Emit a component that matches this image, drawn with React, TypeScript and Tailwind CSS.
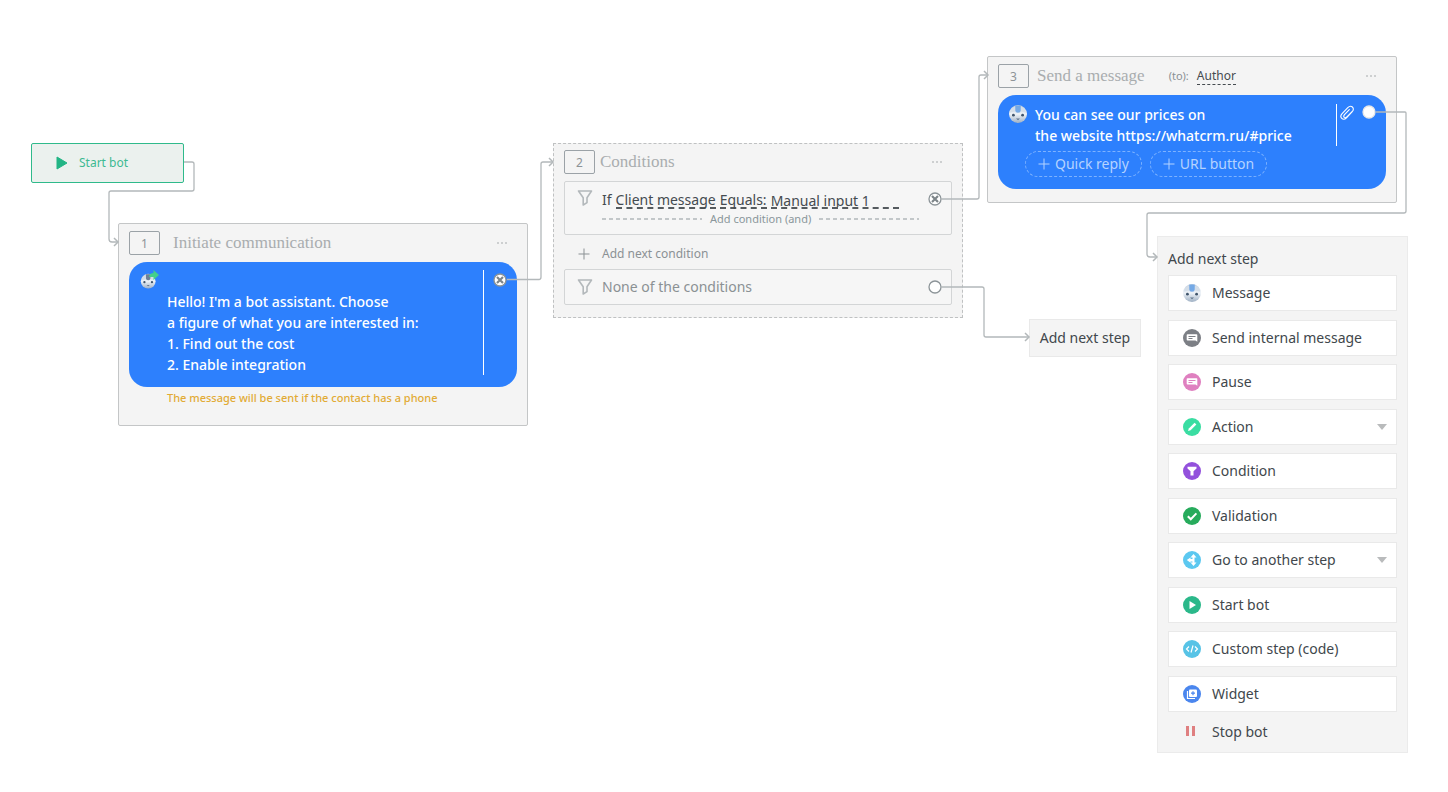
import type { ReactNode } from 'react';

const TEXT_FONT = "font-['Noto_Sans',sans-serif]";
const TITLE_FONT = "font-['Liberation_Serif',serif]";

/* ═══ ICONS ═══ */

function RobotIcon({ arrow = false }: { arrow?: boolean }) {
  return (
    <svg viewBox="0 0 20 20" className="w-5 h-5 shrink-0" aria-hidden="true">
      <defs>
        <linearGradient id="robot" x1="0" y1="0" x2="0" y2="1">
          <stop offset="0" stopColor="#b9c9dc" />
          <stop offset="0.5" stopColor="#eef3f8" />
          <stop offset="1" stopColor="#9fb0c4" />
        </linearGradient>
      </defs>
      <g transform={arrow ? 'translate(1 3) scale(.82)' : undefined}>
        <circle cx="10" cy="10" r="9" fill="url(#robot)" />
        <path d="M2 8.5a8 7 0 0 1 5-6v5zM18 8.5a8 7 0 0 0-5-6v5z" fill="#d5dee8" />
        <path d="M7.3 1.5h5.4v5.2a2.7 2 0 0 1-5.4 0z" fill={arrow ? '#6d8099' : '#74a9e6'} />
        <circle cx="5.4" cy="11.2" r="1.4" fill="#3f546b" />
        <circle cx="14.6" cy="11.2" r="1.4" fill="#3f546b" />
        <path d="M8 14.5h4l-2 1.8z" fill="#60758c" />
      </g>
      {arrow && <path d="M10 7c.5-3 2-4 4.5-4V0L20 5l-5.5 5V7z" fill="#43cf8b" />}
    </svg>
  );
}

function FunnelIcon() {
  return (
    <svg viewBox="0 0 16 18" className="w-4 h-[18px] shrink-0" fill="none" stroke="#b3b8bb" strokeWidth="1.6" strokeLinejoin="round" aria-hidden="true">
      <path d="M1.5 2h13L10 8.8v4.8L6.2 16V8.8z" />
    </svg>
  );
}

function PlusIcon() {
  return (
    <svg viewBox="0 0 12 12" className="w-3 h-3 shrink-0" fill="none" stroke="currentColor" aria-hidden="true">
      <path d="M6 .5v11M.5 6h11" />
    </svg>
  );
}

function ClipIcon() {
  return (
    <svg viewBox="0 0 16 16" className="w-4 h-4" fill="none" stroke="#fff" strokeWidth="1.1" strokeLinecap="round" aria-hidden="true">
      <path d="M12.8 7.2 7.5 12.8c-1.5 1.5-3.6 1.7-4.8.5s-1.1-3 .4-4.6l5.7-6c1.3-1.4 3.3-1.8 4.6-.7 1.3 1.2 1.2 3.1-.1 4.5L7.9 11.9c-.9.9-2 1-2.7.4-.7-.7-.5-1.7.3-2.6l4.8-5" />
    </svg>
  );
}

function StepIcon({ color, children }: { color: string; children: ReactNode }) {
  return (
    <svg viewBox="0 0 20 20" className="w-5 h-5 shrink-0" aria-hidden="true">
      <circle cx="10" cy="10" r="9" fill={color} />
      {children}
    </svg>
  );
}

const noteShape = (color: string) => (
  <>
    <path d="M5.5 6.2h9a.8.8 0 0 1 .8.8v6.8l-1.8-1.2h-8a.8.8 0 0 1-.8-.8V7a.8.8 0 0 1 .8-.8z" fill="#fff" />
    <path d="M6.5 8.5h7M6.5 10.5h4" stroke={color} />
  </>
);

const steps: { label: string; menu?: boolean; icon: ReactNode }[] = [
  { label: 'Message', icon: <RobotIcon /> },
  { label: 'Send internal message', icon: <StepIcon color="#7c7f85">{noteShape('#7c7f85')}</StepIcon> },
  { label: 'Pause', icon: <StepIcon color="#df80c0">{noteShape('#df80c0')}</StepIcon> },
  {
    label: 'Action',
    menu: true,
    icon: (
      <StepIcon color="#3adda2">
        <path d="M6 14l.8-2.6 5.8-5.6 1.8 1.8-5.8 5.6z" fill="#fff" />
      </StepIcon>
    ),
  },
  {
    label: 'Condition',
    icon: (
      <StepIcon color="#9351dc">
        <path d="M5.5 5.8h9v1.8l-3 2.6v4.3h-3v-4.3l-3-2.6z" fill="#fff" />
      </StepIcon>
    ),
  },
  {
    label: 'Validation',
    icon: (
      <StepIcon color="#27ab5c">
        <path d="M5.8 10.2l3 3 5.6-5.8" fill="none" stroke="#fff" strokeWidth="2" />
      </StepIcon>
    ),
  },
  {
    label: 'Go to another step',
    menu: true,
    icon: (
      <StepIcon color="#5cc8f0">
        <path d="M11.5 4l3 3.5h-2v5h2l-3 3.5-3-3.5h2v-1h-2v1.3L4.8 10l3.7-2.6V9h2V7.5h-2z" fill="#fff" />
      </StepIcon>
    ),
  },
  {
    label: 'Start bot',
    icon: (
      <StepIcon color="#2bb88a">
        <path d="M7.5 6l6.5 4-6.5 4z" fill="#fff" />
      </StepIcon>
    ),
  },
  {
    label: 'Custom step (code)',
    icon: (
      <StepIcon color="#57c3e6">
        <path d="M7 7.5 4.5 10 7 12.5M13 7.5l2.5 2.5-2.5 2.5M11 6.5l-2 7" fill="none" stroke="#fff" strokeWidth="1.2" />
      </StepIcon>
    ),
  },
  {
    label: 'Widget',
    icon: (
      <StepIcon color="#4a86ee">
        <path d="M5.5 7v7.5H13" fill="none" stroke="#fff" strokeWidth="1.2" />
        <rect x="7" y="5.5" width="8" height="7.5" rx="1" fill="#fff" />
        <path d="M11 7.2v4M9 9.2h4" stroke="#4a86ee" strokeWidth="1.2" />
      </StepIcon>
    ),
  },
];

/* ═══ NODE PARTS ═══ */

function NodeHeader({ num, title, gap, children }: { num: number; title: string; gap: string; children?: ReactNode }) {
  return (
    <header className="flex items-center h-6">
      <span className="w-[31px] h-6 shrink-0 rounded-xs border border-[#9ba2a7] text-xs leading-6 text-center text-[#8d9397]">{num}</span>
      <h2 className={`${gap} ${TITLE_FONT} text-[17px] leading-6 text-[#a9adaf] whitespace-nowrap`}>{title}</h2>
      {children}
      <button aria-label="Step menu" className="ml-auto mr-[10px] flex gap-[2px] py-2">
        <i className="w-[2px] h-[2px] bg-[#cdcfd0]" />
        <i className="w-[2px] h-[2px] bg-[#cdcfd0]" />
        <i className="w-[2px] h-[2px] bg-[#cdcfd0]" />
      </button>
    </header>
  );
}

function Port({ closed = false, plain = false }: { closed?: boolean; plain?: boolean }) {
  return (
    <button aria-label="Output" className="block w-[14px] h-[14px] shrink-0">
      <svg viewBox="0 0 14 14" className="w-[14px] h-[14px]">
        <circle cx="7" cy="7" r="6" fill="#fff" stroke={plain ? '#e8e8e8' : '#8c9498'} strokeWidth="1.3" />
        {closed && <path d="M4 4l6 6M10 4l-6 6" stroke="#7d8589" strokeWidth="2.2" />}
      </svg>
    </button>
  );
}

function DashLine() {
  return (
    <svg className="w-[100px] h-[2px]" aria-hidden="true">
      <path d="M0 1H100" stroke="#8f989c" strokeDasharray="4 3" />
    </svg>
  );
}

function Connectors() {
  const paths = [
    'M184 162H192Q194 162 194 164V189Q194 191 192 191H111Q109 191 109 193V239Q109 242 112 242H117',
    'M507 279.5H539Q541 279.5 541 277V164Q541 162 543 162H552',
    'M941 199H977Q979 199 979 197V77Q979 75 981 75H987',
    'M941 287H982Q984 287 984 289V335Q984 337 986 337H1029',
    'M1376 112H1405Q1406 112 1406 113V211Q1406 213 1404 213H1149Q1147 213 1147 215V254Q1147 257 1150 257H1157',
  ];
  const heads = ['M114 238l4 4-4 4', 'M549 158l4 4-4 4', 'M984 71l4 4-4 4', 'M1025 333l4 4-4 4', 'M1153 253l4 4-4 4'];
  return (
    <svg className="absolute inset-0 w-full h-full pointer-events-none" fill="none" stroke="#b3b8ba" aria-hidden="true">
      {paths.map(d => <path key={d} d={d} strokeWidth="1.3" />)}
      {heads.map(d => <path key={d} d={d} strokeWidth="1.5" />)}
    </svg>
  );
}

/* ═══ NODES ═══ */

function InitiateNode() {
  return (
    <section className="absolute left-[118px] top-[223px] w-[410px] border border-[#c4c6c7] rounded-xs bg-[#f4f4f4] px-[10px] pt-[7px] pb-[17px]">
      <NodeHeader num={1} title="Initiate communication" gap="ml-[13px]" />
      <div className="mt-[7px] rounded-[18px] bg-[#2d80fd] flex px-[10px] pt-2 pb-3">
        <RobotIcon arrow />
        <p className="ml-2 pt-[21px] flex-1 text-sm leading-[21px] font-medium text-white">
          Hello! I'm a bot assistant. Choose
          <br />
          a figure of what you are interested in:
          <br />
          1. Find out the cost
          <br />
          2. Enable integration
        </p>
        <div className="border-l border-white pl-[9px] pt-[3px]">
          <Port closed />
        </div>
      </div>
      <p className="pl-[38px] text-[11px] leading-[21px] font-medium text-[#e2ab35]">The message will be sent if the contact has a phone</p>
    </section>
  );
}

function ConditionsNode() {
  const underline = 'h-4 leading-[14px] border-b-2 border-dashed border-[#555b5f]';
  return (
    <section className="absolute left-[553px] top-[143px] w-[410px] border border-dashed border-[#bfc1c2] bg-[#f4f4f4] px-[10px] pt-[6px] pb-3">
      <NodeHeader num={2} title="Conditions" gap="ml-[5px]" />
      <div className="mt-[7px] h-[54px] rounded-xs border border-[#d3d5d6] bg-[#f6f6f6] flex pl-3 pr-[9px] pt-[7px]">
        <FunnelIcon />
        <div className="ml-[9px] flex-1 text-sm text-[#454b50]">
          <div className="flex gap-1 leading-[14px] pt-1 pb-[2px] whitespace-nowrap">
            <span>If</span>
            <button className={underline}>Client message</button>
            <button className={underline}>Equals:</button>
            <input aria-label="Value" defaultValue="Manual input 1" className={`${underline} w-[128px] outline-none`} />
          </div>
          <button className="flex items-center gap-2 text-[11px] leading-4 text-[#8a979b] whitespace-nowrap">
            <DashLine />
            Add condition (and)
            <DashLine />
          </button>
        </div>
        <div className="pt-[3px]"><Port closed /></div>
      </div>
      <button className="flex items-center gap-3 h-[34px] pl-[14px] pt-1 text-xs text-[#8b9194]">
        <PlusIcon />
        Add next condition
      </button>
      <div className="h-9 rounded-xs border border-[#d3d5d6] bg-[#f6f6f6] flex items-center pl-3 pr-[9px]">
        <FunnelIcon />
        <span className="ml-[9px] flex-1 text-sm text-[#8b9194]">None of the conditions</span>
        <Port />
      </div>
    </section>
  );
}

function MessageNode() {
  const pill = 'flex items-center gap-[5px] h-[26px] px-3 rounded-full border border-dashed border-[#7db2ff] text-sm text-[#b5d3ff] whitespace-nowrap';
  return (
    <section className="absolute left-[987px] top-[56px] w-[410px] border border-[#c4c6c7] rounded-xs bg-[#f4f4f4] px-[10px] pt-[7px] pb-[13px]">
      <NodeHeader num={3} title="Send a message" gap="ml-2">
        <span className="ml-6 text-[11px] text-[#8b9194]">(to):</span>
        <button className="ml-2 text-xs leading-4 text-[#454b50] border-b border-dashed border-[#454b50]">Author</button>
      </NodeHeader>
      <div className="mt-[7px] rounded-[18px] bg-[#2d80fd] pt-[9px] pb-3 px-[10px]">
        <div className="flex">
          <RobotIcon />
          <p className="ml-[7px] flex-1 text-sm leading-[21px] font-medium text-white">
            You can see our prices on
            <br />
            the website https://whatcrm.ru/#price
          </p>
          <div className="border-l border-white pl-[2px] pt-px flex gap-[7px]">
            <button aria-label="Attach file" className="self-start"><ClipIcon /></button>
            <Port plain />
          </div>
        </div>
        <div className="flex gap-2 pt-[5px] pl-[17px]">
          <button className={pill}><PlusIcon />Quick reply</button>
          <button className={pill}><PlusIcon />URL button</button>
        </div>
      </div>
    </section>
  );
}

function NextStepMenu() {
  return (
    <section className="absolute left-[1157px] top-[236px] w-[251px] border border-[#ebebeb] bg-[#f4f4f4] px-[10px] text-sm text-[#41474c]">
      <h2 className="pt-[11px] leading-[21px]">Add next step</h2>
      <div className="mt-[6px] h-[437px] flex flex-col justify-between">
        {steps.map(step => (
          <button key={step.label} className="w-full h-9 flex items-center gap-[10px] pl-[13px] pr-[9px] bg-white border border-[#e9e9e9]">
            {step.icon}
            {step.label}
            {step.menu && (
              <svg viewBox="0 0 10 6" className="ml-auto w-[10px] h-[6px]" aria-hidden="true">
                <path d="M0 0h10L5 6z" fill="#b9bbbc" />
              </svg>
            )}
          </button>
        ))}
      </div>
      <button className="flex items-center gap-[10px] h-10 pl-[14px]">
        <svg viewBox="0 0 20 20" className="w-5 h-5" aria-hidden="true">
          <path d="M4 4h3v10H4zM10 4h3v10h-3z" fill="#df7f80" />
        </svg>
        Stop bot
      </button>
    </section>
  );
}

export default function App() {
  return (
    <main className={`relative min-h-screen bg-white overflow-hidden ${TEXT_FONT}`}>
      <button className="absolute left-[31px] top-[143px] w-[153px] h-10 flex items-center gap-[11px] pl-6 rounded-xs border border-[#2fba8b] bg-[#ebf1ee] text-xs text-[#3dba92]">
        <svg viewBox="0 0 12 14" className="w-3 h-[14px]" aria-hidden="true">
          <path d="M1 1l10 6-10 6z" fill="#22b585" stroke="#22b585" strokeLinejoin="round" />
        </svg>
        Start bot
      </button>
      <InitiateNode />
      <ConditionsNode />
      <MessageNode />
      <button className="absolute left-[1029px] top-[319px] w-[112px] h-[38px] border border-[#e9e9e9] bg-[#f4f4f4] text-sm text-[#41474c]">Add next step</button>
      <NextStepMenu />
      <Connectors />
    </main>
  );
}
